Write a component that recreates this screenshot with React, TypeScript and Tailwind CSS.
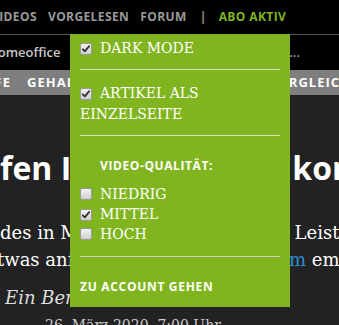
import React from 'react';

const sans = { fontFamily: '"Open Sans", "Liberation Sans", sans-serif' };
const serif = { fontFamily: '"DejaVu Serif", "Liberation Serif", serif' };

const Box: React.FC<{ checked?: boolean }> = ({ checked }) => (
  <span className="inline-flex items-center justify-center w-[12px] h-[12px] mr-[8px] align-[-1px] rounded-[2px] border border-[#9a9a9a] bg-gradient-to-b from-[#f2f2f2] to-[#cfcfcf]">
    {checked && (
      <svg viewBox="0 0 12 12" className="w-[10px] h-[10px]">
        <path d="M2.2 6.4 L4.6 8.8 L9.8 2.6" fill="none" stroke="#333" strokeWidth="2.2" strokeLinecap="round" strokeLinejoin="round" />
      </svg>
    )}
  </span>
);

const App: React.FC = () => {
  return (
    <div className="relative w-[339px] h-[325px] overflow-hidden bg-[#222]">
      {/* top nav */}
      <div className="h-[35px] bg-black border-b border-[#555] flex items-center whitespace-nowrap text-[12px] font-bold tracking-[0.4px] text-[#9a9a9a]" style={sans}>
        <span className="ml-[-9px]">VIDEOS</span>
        <span className="ml-[11px]">VORGELESEN</span>
        <span className="ml-[11px]">FORUM</span>
        <span className="ml-[13px]">|</span>
        <span className="ml-[12px] text-[#7fb51f]">ABO AKTIV</span>
      </div>

      {/* topic row */}
      <div className="h-[35px] bg-black flex items-center whitespace-nowrap text-[13px] font-semibold text-[#c8c8c8]" style={sans}>
        <span className="ml-[-12px]">Homeoffice</span>
        <span className="ml-[14px] text-[#3b8fd0]">‹</span>
        <span className="ml-auto mr-[39px] text-[#999]">...</span>
      </div>

      {/* category bar */}
      <div className="h-[25px] bg-[#7e7e7e] flex items-center whitespace-nowrap text-[13px] font-bold tracking-[1px] text-white" style={sans}>
        <span className="ml-[-30px]">HIL<span className="text-[#f3c8bd]">F</span>E</span>
        <span className="ml-[16px]">GEHALT</span>
        <span className="ml-auto mr-[-12px]">VERGLEICH</span>
      </div>

      {/* article */}
      <div className="text-white">
        <div className="mt-[53px] flex justify-between whitespace-nowrap text-[32px] leading-[40px] font-bold" style={sans}>
          <span>fen IT</span>
          <span className="mr-[-14px]">kon</span>
        </div>
        <div className="mt-[31px] text-[18px] leading-[27px]" style={serif}>
          <div className="flex justify-between whitespace-nowrap">
            <span>des in M</span>
            <span className="mr-[-12px]">Leistu</span>
          </div>
          <div className="flex justify-between whitespace-nowrap">
            <span className="ml-[-3px]">twas anf</span>
            <span className="mr-[-12px]"><span className="text-[#2a8fd0]">m</span> emp</span>
          </div>
        </div>
        <div className="mt-[13px] ml-[5px] text-[18px] leading-[24px] italic text-[#ddd]" style={serif}>Ein Bericht</div>
        <div className="mt-[5px] ml-[45px] text-[14px] leading-[20px] text-[#ccc]" style={serif}>26. März 2020, 7:00 Uhr</div>
      </div>

      {/* settings dropdown */}
      <div className="absolute left-[70px] top-[34px] w-[220px] h-[273px] bg-[#80b51f] px-[10px] text-white">
        <div className="pt-[4px] text-[14px] leading-[21px]" style={serif}>
          <Box checked />DARK MODE
        </div>
        <div className="mt-[10px] h-px bg-[#d3e0b8]" />
        <div className="mt-[13px] text-[14px] leading-[21px]" style={serif}>
          <Box checked />ARTIKEL ALS EINZELSEITE
        </div>
        <div className="mt-[10px] h-px bg-[#d3e0b8]" />
        <div className="mt-[22px] pl-[20px] text-[12px] leading-[16px] font-bold tracking-[0.6px]" style={sans}>VIDEO-QUALITÄT:</div>
        <div className="mt-[10px] text-[14px] leading-[20px]" style={serif}>
          <div><Box />NIEDRIG</div>
          <div><Box checked />MITTEL</div>
          <div><Box />HOCH</div>
        </div>
        <div className="mt-[12px] h-px bg-[#d0d4c8]" />
        <div className="mt-[22px] text-[12px] leading-[16px] font-bold tracking-[0.7px]" style={sans}>ZU ACCOUNT GEHEN</div>
      </div>
    </div>
  );
};

export default App;
